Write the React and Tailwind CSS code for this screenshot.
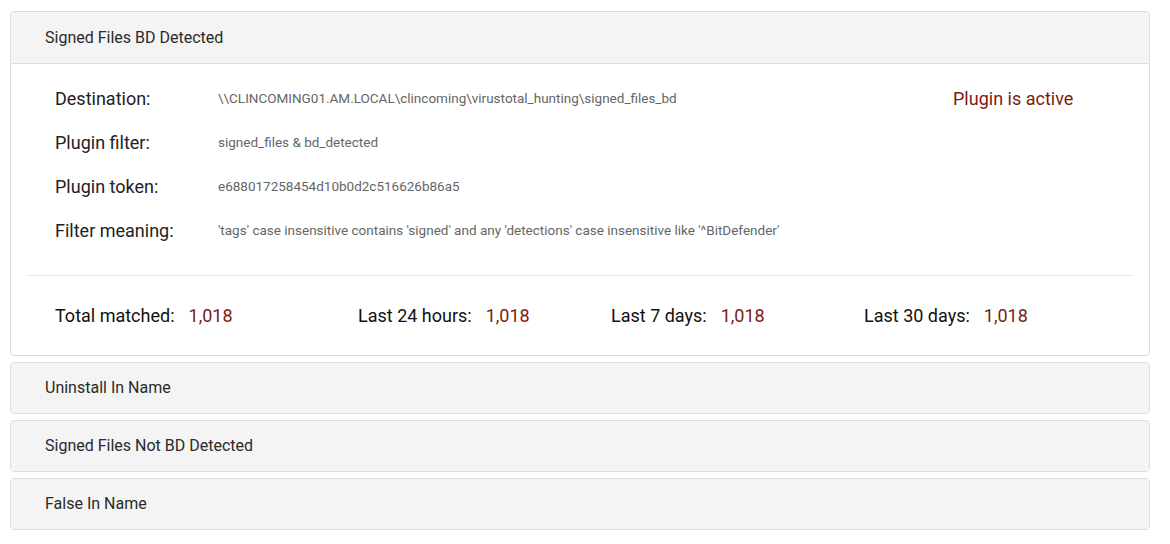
const plugins = [
  {
    name: 'Signed Files BD Detected',
    open: true,
    destination: '\\\\CLINCOMING01.AM.LOCAL\\clincoming\\virustotal_hunting\\signed_files_bd',
    filter: 'signed_files & bd_detected',
    token: 'e688017258454d10b0d2c516626b86a5',
    meaning: "'tags' case insensitive contains 'signed' and any 'detections' case insensitive like '^BitDefender'",
    stats: { total: '1,018', day: '1,018', week: '1,018', month: '1,018' },
  },
  { name: 'Uninstall In Name' },
  { name: 'Signed Files Not BD Detected' },
  { name: 'False In Name' },
]

function InfoRow({ label, value, children }) {
  return (
    <div className="flex items-center h-[44px]">
      <div className="w-[163px] shrink-0 text-[18px] text-[#222]">{label}</div>
      <div className="flex-1 text-[13.5px] text-[#666]">{value}</div>
      {children}
    </div>
  )
}

function Stat({ label, value, width }) {
  return (
    <div className={`flex items-center shrink-0 ${width}`}>
      <span className="text-[18px] text-[#111]">{label}</span>
      <span className="ml-[14px] text-[18px] text-[#7b1c10]">{value}</span>
    </div>
  )
}

function PluginPanel({ plugin }) {
  return (
    <div className="border border-[#dcdcdc] rounded-[4px] bg-white overflow-hidden">
      <div
        className={`${plugin.open ? 'h-[51px]' : 'h-[50px]'} flex items-center px-[34px] bg-[#f4f4f4] text-[16px] text-[#2a2a2a]`}
      >
        {plugin.name}
      </div>
      {plugin.open && (
        <div className="border-t border-[#dcdcdc] px-[16px]">
          <div className="px-[28px] pt-[12px] pb-[23px]">
            <InfoRow label="Destination:" value={plugin.destination}>
              <div className="w-[152px] shrink-0 text-[18px] text-[#7b1c10]">Plugin is active</div>
            </InfoRow>
            <InfoRow label="Plugin filter:" value={plugin.filter} />
            <InfoRow label="Plugin token:" value={plugin.token} />
            <InfoRow label="Filter meaning:" value={plugin.meaning} />
          </div>
          <div className="border-t border-[#ebebeb]" />
          <div className="flex items-center h-[79px] px-[28px]">
            <Stat label="Total matched:" value={plugin.stats.total} width="w-[303px]" />
            <Stat label="Last 24 hours:" value={plugin.stats.day} width="w-[253px]" />
            <Stat label="Last 7 days:" value={plugin.stats.week} width="w-[253px]" />
            <Stat label="Last 30 days:" value={plugin.stats.month} width="w-[200px]" />
          </div>
        </div>
      )}
    </div>
  )
}

export default function App() {
  return (
    <div
      className="w-[1170px] h-[544px] bg-white pt-[11px] px-[10px] pr-[20px]"
      style={{ fontFamily: 'Roboto, "Liberation Sans", sans-serif' }}
    >
      <div className="flex flex-col gap-[6px]">
        {plugins.map(p => (
          <PluginPanel key={p.name} plugin={p} />
        ))}
      </div>
    </div>
  )
}
